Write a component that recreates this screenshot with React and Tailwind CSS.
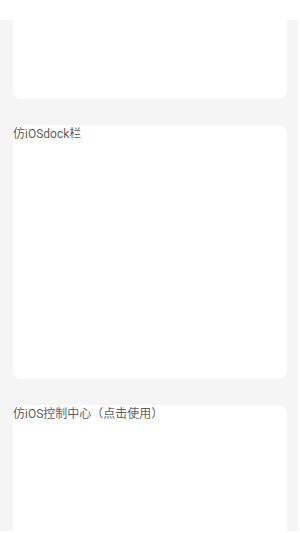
export default function App() {
  const font = { fontFamily: '"Roboto", "Noto Sans CJK SC", sans-serif' };
  return (
    <div className="h-[533px] w-[300px] overflow-hidden bg-white" style={font}>
      <div className="h-[20px] bg-white" />
      <div className="mr-[2px] h-[511px] overflow-hidden bg-[#f5f5f5] pl-[13px] pr-[11px]">
        <div className="-mt-[6px] h-[85px] rounded-[8px] bg-white" />
        <div className="mt-[26px] h-[254px] rounded-[8px] bg-white">
          <div className="pt-[1px] text-[12px] leading-[16px] text-[#5f5f5f]">仿iOSdock栏</div>
        </div>
        <div className="mt-[26px] h-[300px] rounded-[8px] bg-white">
          <div className="pt-[1px] text-[12px] leading-[16px] text-[#5f5f5f]">仿iOS控制中心（点击使用）</div>
        </div>
      </div>
    </div>
  );
}
